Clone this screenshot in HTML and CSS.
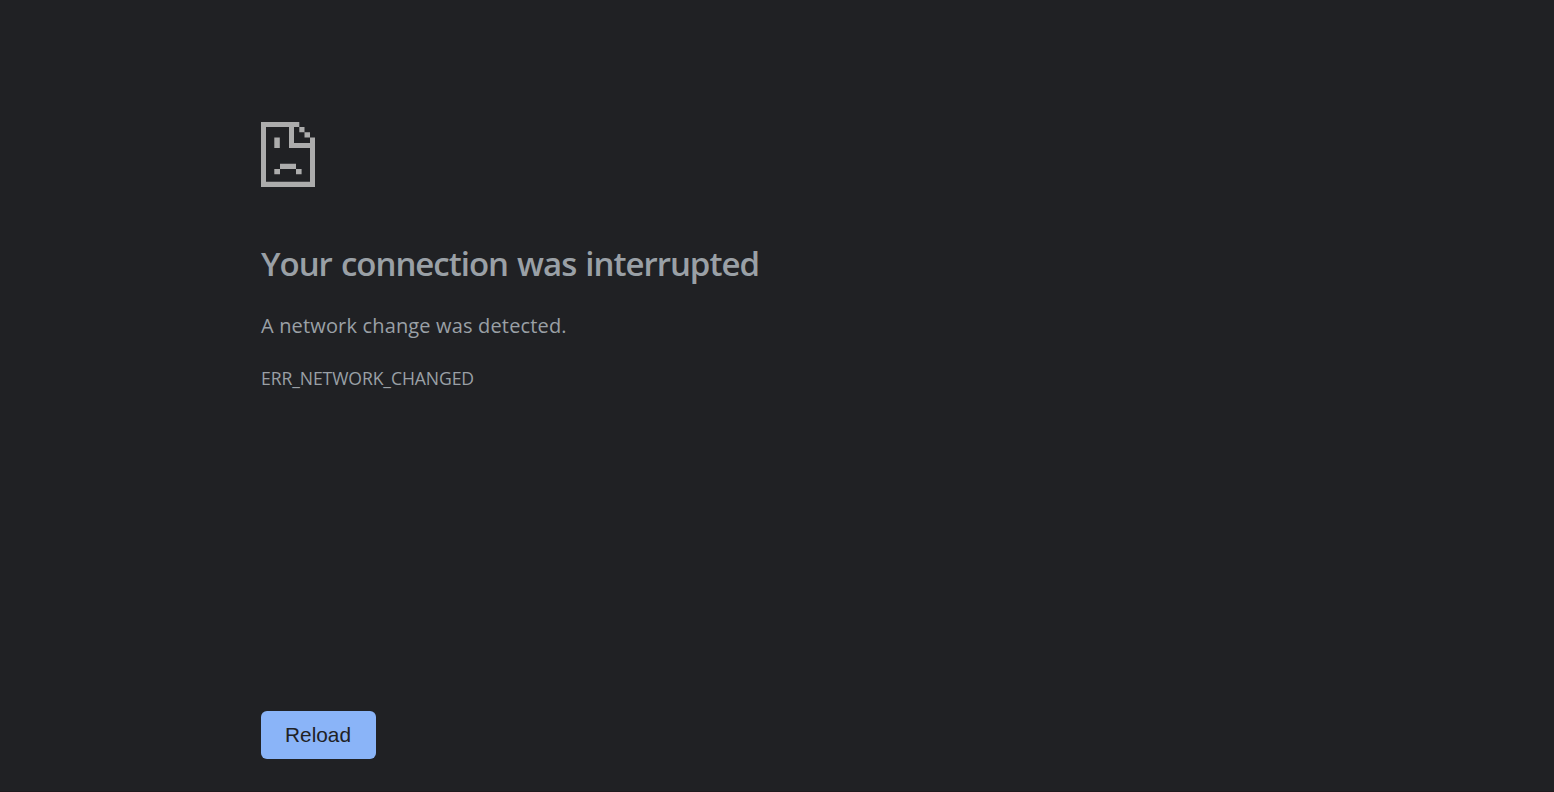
FILE: index.html
```html
<!DOCTYPE html>
<html lang="en">
<head>
<meta charset="utf-8">
<title>Your connection was interrupted</title>
<link rel="stylesheet" href="styles.css">
</head>
<body>
<main class="error-page">
  <svg class="error-icon" viewBox="0 0 54 65" aria-hidden="true">
    <path d="M0 0H38.3V5H33V21H54V65H0ZM5 5V59.8H49V26H28V5Z"/>
    <path d="M38.3 5H43.5V10.2H38.3ZM43.5 10.2H49V15.5H43.5ZM49 15.5H54V22H49ZM13.3 15.5H18.8V26H13.3ZM19 41.8H35V47H19ZM13.3 47H19V52.2H13.3ZM35 47H40.6V52.2H35Z"/>
  </svg>
  <h1 class="title">Your connection was interrupted</h1>
  <p class="summary">A network change was detected.</p>
  <div class="code">ERR_NETWORK_CHANGED</div>
  <button class="reload" type="button">Reload</button>
</main>
</body>
</html>
```
FILE: styles.css
```css
body {
  margin: 0;
  background: #202124;
  color: #9aa0a6;
  font-family: "Open Sans", "Noto Sans", sans-serif;
}
.error-page {
  box-sizing: border-box;
  height: 792px;
  padding: 122px 261px 32px;
  border-bottom: 1px solid #1f1a1d;
  display: flex;
  flex-direction: column;
  align-items: flex-start;
}
.error-icon {
  width: 54px;
  height: 65px;
  fill: #acacac;
}
.title {
  margin: 56px 0 0;
  font-size: 33px;
  font-weight: 600;
  letter-spacing: -1.02px;
  word-spacing: 1.6px;
  line-height: 42px;
  white-space: nowrap;
}
.summary {
  margin: 26px 0 0;
  font-size: 20px;
  letter-spacing: 0.16px;
  line-height: 30px;
}
.code {
  margin-top: 25px;
  font-size: 17.6px;
  letter-spacing: -0.1px;
  line-height: 24px;
}
.reload {
  margin-top: auto;
  width: 115px;
  height: 48px;
  padding: 0 1px 0 0;
  border: 0;
  border-radius: 6px;
  background: #8ab4f8;
  color: #202124;
  font: 20.8px "Liberation Sans", Arial, sans-serif;
}
```
